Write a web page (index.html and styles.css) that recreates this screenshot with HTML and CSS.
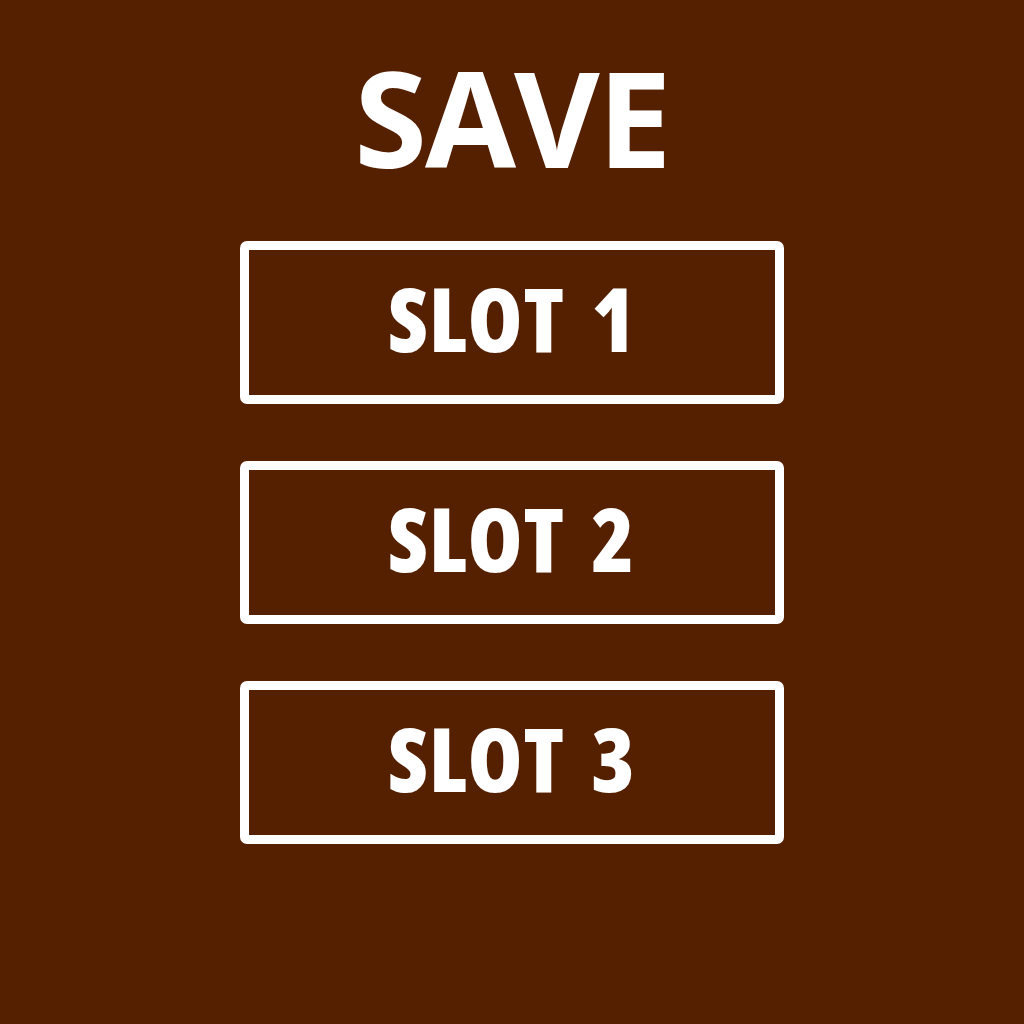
FILE: index.html
```html
<!DOCTYPE html>
<html>
<head>
<meta charset="utf-8">
<link rel="stylesheet" href="styles.css">
</head>
<body>
<main class="menu">
  <h1 class="title">SAVE</h1>
  <div class="slots">
    <button class="slot">SLOT 1</button>
    <button class="slot">SLOT 2</button>
    <button class="slot">SLOT 3</button>
  </div>
</main>
</body>
</html>
```
FILE: styles.css
```css
html, body {
  margin: 0;
  padding: 0;
  background: #552000;
  height: 100%;
}
.menu {
  display: flex;
  flex-direction: column;
  align-items: center;
  padding-top: 51px;
  font-family: "Open Sans", "Noto Sans", sans-serif;
  color: #ffffff;
}
.title {
  margin: 0 0 58px 0;
  font-size: 132px;
  line-height: 132px;
  font-weight: 700;
  letter-spacing: -2px;
}
.slots {
  display: flex;
  flex-direction: column;
  gap: 57px;
}
.slot {
  box-sizing: border-box;
  width: 544px;
  height: 163px;
  border: 9px solid #ffffff;
  border-radius: 7px;
  background: transparent;
  color: #ffffff;
  font-family: "Open Sans", "Noto Sans", sans-serif;
  font-size: 88px;
  font-weight: 800;
  font-stretch: 75%;
  line-height: 1;
  letter-spacing: 1px;
  word-spacing: 10px;
  padding: 0 0 9px 0;
  display: flex;
  align-items: center;
  justify-content: center;
}
```
